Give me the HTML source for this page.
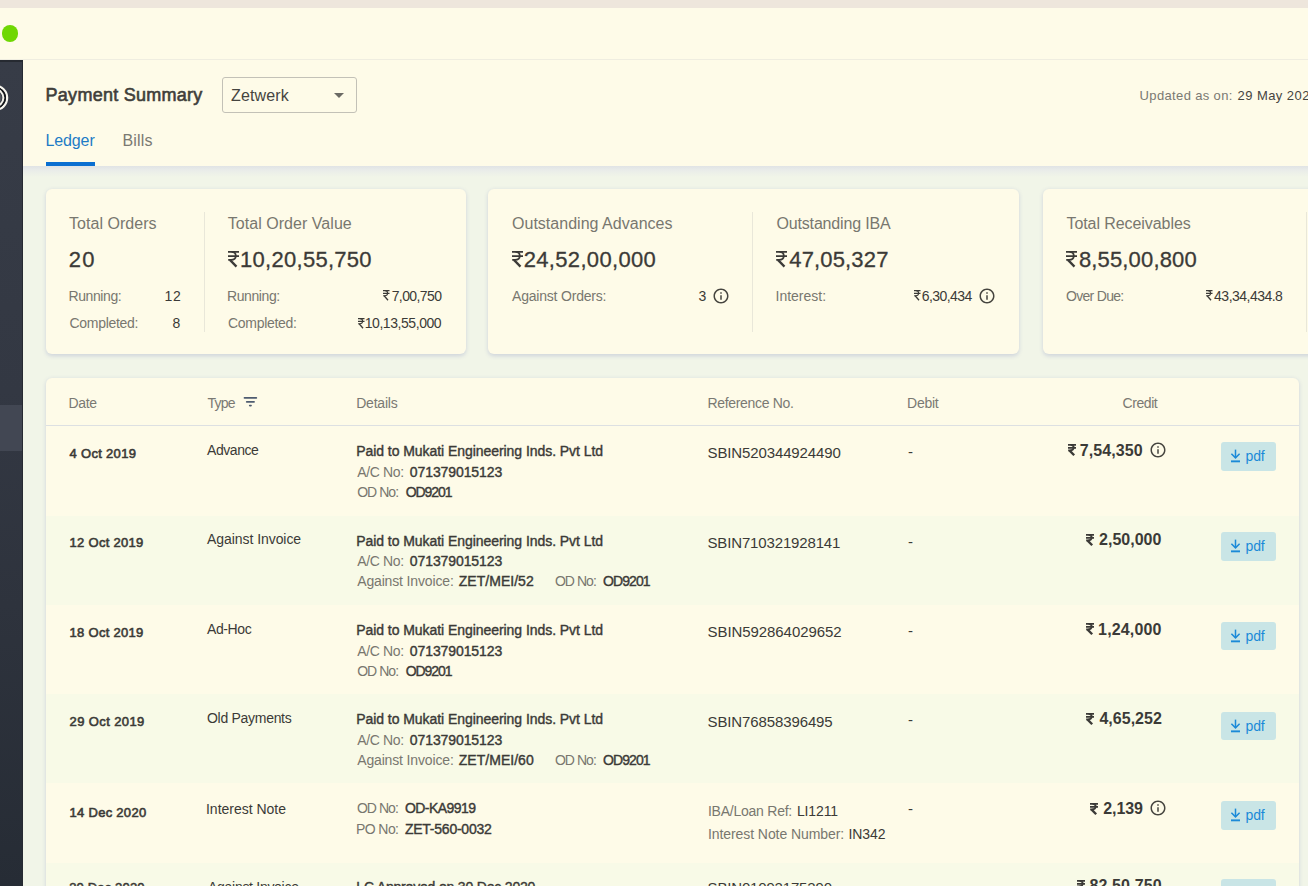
<!DOCTYPE html>
<html><head><meta charset="utf-8">
<style>
html,body{margin:0;padding:0}
body{width:1308px;height:886px;overflow:hidden;position:relative;background:#f1f5e8;font-family:"Liberation Sans",sans-serif}
.t{position:absolute;white-space:pre}
.rp{position:absolute;overflow:visible}
.ic{position:absolute}
.abs{position:absolute}
.topbar{left:0;top:0;width:1308px;height:8px;background:#eee6dc}
.appbar{left:0;top:8px;width:1308px;height:51px;background:#fefbe8;border-bottom:1px solid #efede0}
.dot{left:1.5px;top:25px;width:16.5px;height:16.5px;border-radius:50%;background:#6fd703}
.side{left:0;top:60px;width:23px;height:826px;background:linear-gradient(#373c47,#333843 40%,#2e333d 66%,#262c35)}
.sideedge{left:21.5px;top:60px;width:1.5px;height:826px;background:#262a32}
.hl{left:0;top:405px;width:21.5px;height:46px;background:#424753}
.ring{left:-19px;top:83.7px;width:21.5px;height:21.5px;border:3px solid #f4f2ea;border-radius:50%}
.ring2{left:-12px;top:91px;width:10px;height:10px;border:2.2px solid #f4f2ea;border-radius:50%}
.hdr{left:23px;top:60px;width:1285px;height:106px;background:#fefbe8;}
.dd{left:222px;top:77px;width:133px;height:34px;border:1px solid #c3c1b7;border-radius:3px;background:#fefbe8}
.tri{left:333.5px;top:92.5px;width:0;height:0;border-left:5.5px solid transparent;border-right:5.5px solid transparent;border-top:5.7px solid #6b6a64}
.tabline{left:46px;top:161.5px;width:49px;height:4.5px;background:#0a6fd1}
.card{top:189px;height:165px;background:#fefbe8;border-radius:6px;box-shadow:0 1.5px 4px rgba(70,80,170,.2)}
.div{top:212px;width:1px;height:120px;background:#e9e7d9}
.tbl{left:46px;top:377.5px;width:1253px;height:600px;background:#fefbe8;border-radius:6px;box-shadow:0 1.5px 4px rgba(70,80,170,.2);overflow:hidden}
.hline{left:46px;top:425px;width:1253px;height:1px;background:#dde0e2}
.row2{left:46px;width:1253px;background:#f8fae7}
.pb{position:absolute;left:1221px;width:55px;height:28.7px;border-radius:3px;background:#c9e5e6}
</style></head><body>
<div class="abs topbar"></div>
<div class="abs appbar"></div>
<div class="abs dot"></div>
<div class="abs side"></div>
<div class="abs hl"></div>
<div class="abs sideedge"></div>
<div class="abs" style="left:0;top:60px;width:23px;height:1.5px;background:#262a31"></div>
<svg class="abs" style="left:0;top:80px" width="16" height="36" viewBox="0 0 16 36"><circle cx="-5" cy="17.8" r="11.8" fill="none" stroke="#15181d" stroke-width="1.8"/><circle cx="-5" cy="17.8" r="12.1" fill="none" stroke="#f7f5ee" stroke-width="2.3"/><circle cx="-5" cy="17.8" r="10.2" fill="none" stroke="#14161a" stroke-width="1.6"/><circle cx="-5" cy="17.8" r="8.4" fill="none" stroke="#f4f2ea" stroke-width="2"/><circle cx="-5" cy="17.8" r="6.6" fill="#55585e"/></svg>
<div class="abs" style="left:23px;top:166px;width:1285px;height:11px;background:linear-gradient(#e0e3e5,#e9ece9 35%,rgba(241,245,232,0))"></div>
<div class="abs hdr"></div>
<div class="abs dd"></div>
<div class="abs tri"></div>
<div class="abs tabline"></div>
<div class="abs card" style="left:46px;width:420px"></div>
<div class="abs card" style="left:488px;width:531px"></div>
<div class="abs card" style="left:1043px;width:300px"></div>
<div class="abs div" style="left:204px"></div>
<div class="abs div" style="left:752px"></div>
<div class="abs div" style="left:1306px"></div>
<div class="abs tbl"></div>
<div class="abs hline"></div>
<div class="abs row2" style="top:515.5px;height:89.5px"></div>
<div class="abs row2" style="top:694.3px;height:89px"></div>
<div class="abs row2" style="top:863px;height:40px"></div>
<svg class="abs" style="left:243px;top:396px" width="15" height="11" viewBox="0 0 15 11"><g fill="#4f5c70"><rect x="0.6" y="1.1" width="13.6" height="1.7" rx="0.8"/><rect x="2.9" y="4.9" width="9" height="1.8" rx="0.8"/><rect x="5.9" y="8.8" width="3" height="1.6" rx="0.8"/></g></svg>
<div class="pb" style="top:442.20px"><svg style="position:absolute;left:9px;top:7px" width="11" height="14" viewBox="0 0 11 14"><g stroke="#1b8ad8" fill="none" stroke-width="1.5"><path d="M5.5 0.6V8.6"/><path d="M1.4 4.8L5.5 8.9L9.6 4.8"/></g><rect x="1" y="11.4" width="9" height="1.9" fill="#1b8ad8"/></svg><span style="position:absolute;left:24.5px;top:7px;font-size:14px;line-height:14px;letter-spacing:-0.1px;color:#1b8ad8">pdf</span></div>
<div class="pb" style="top:532.00px"><svg style="position:absolute;left:9px;top:7px" width="11" height="14" viewBox="0 0 11 14"><g stroke="#1b8ad8" fill="none" stroke-width="1.5"><path d="M5.5 0.6V8.6"/><path d="M1.4 4.8L5.5 8.9L9.6 4.8"/></g><rect x="1" y="11.4" width="9" height="1.9" fill="#1b8ad8"/></svg><span style="position:absolute;left:24.5px;top:7px;font-size:14px;line-height:14px;letter-spacing:-0.1px;color:#1b8ad8">pdf</span></div>
<div class="pb" style="top:621.60px"><svg style="position:absolute;left:9px;top:7px" width="11" height="14" viewBox="0 0 11 14"><g stroke="#1b8ad8" fill="none" stroke-width="1.5"><path d="M5.5 0.6V8.6"/><path d="M1.4 4.8L5.5 8.9L9.6 4.8"/></g><rect x="1" y="11.4" width="9" height="1.9" fill="#1b8ad8"/></svg><span style="position:absolute;left:24.5px;top:7px;font-size:14px;line-height:14px;letter-spacing:-0.1px;color:#1b8ad8">pdf</span></div>
<div class="pb" style="top:711.50px"><svg style="position:absolute;left:9px;top:7px" width="11" height="14" viewBox="0 0 11 14"><g stroke="#1b8ad8" fill="none" stroke-width="1.5"><path d="M5.5 0.6V8.6"/><path d="M1.4 4.8L5.5 8.9L9.6 4.8"/></g><rect x="1" y="11.4" width="9" height="1.9" fill="#1b8ad8"/></svg><span style="position:absolute;left:24.5px;top:7px;font-size:14px;line-height:14px;letter-spacing:-0.1px;color:#1b8ad8">pdf</span></div>
<div class="pb" style="top:801.20px"><svg style="position:absolute;left:9px;top:7px" width="11" height="14" viewBox="0 0 11 14"><g stroke="#1b8ad8" fill="none" stroke-width="1.5"><path d="M5.5 0.6V8.6"/><path d="M1.4 4.8L5.5 8.9L9.6 4.8"/></g><rect x="1" y="11.4" width="9" height="1.9" fill="#1b8ad8"/></svg><span style="position:absolute;left:24.5px;top:7px;font-size:14px;line-height:14px;letter-spacing:-0.1px;color:#1b8ad8">pdf</span></div>
<div class="pb" style="top:878.50px"><svg style="position:absolute;left:9px;top:7px" width="11" height="14" viewBox="0 0 11 14"><g stroke="#1b8ad8" fill="none" stroke-width="1.5"><path d="M5.5 0.6V8.6"/><path d="M1.4 4.8L5.5 8.9L9.6 4.8"/></g><rect x="1" y="11.4" width="9" height="1.9" fill="#1b8ad8"/></svg><span style="position:absolute;left:24.5px;top:7px;font-size:14px;line-height:14px;letter-spacing:-0.1px;color:#1b8ad8">pdf</span></div>
<svg class="ic" style="left:711.60px;top:287.00px" width="18" height="18" viewBox="0 0 24 24"><path fill="#46453f" d="M11 7h2v2h-2zm0 4h2v6h-2zm1-9C6.48 2 2 6.48 2 12s4.48 10 10 10 10-4.48 10-10S17.52 2 12 2zm0 18c-4.41 0-8-3.59-8-8s3.59-8 8-8 8 3.59 8 8-3.59 8-8 8z"/></svg>
<svg class="ic" style="left:978.30px;top:287.00px" width="18" height="18" viewBox="0 0 24 24"><path fill="#46453f" d="M11 7h2v2h-2zm0 4h2v6h-2zm1-9C6.48 2 2 6.48 2 12s4.48 10 10 10 10-4.48 10-10S17.52 2 12 2zm0 18c-4.41 0-8-3.59-8-8s3.59-8 8-8 8 3.59 8 8-3.59 8-8 8z"/></svg>
<svg class="ic" style="left:1148.50px;top:440.90px" width="18" height="18" viewBox="0 0 24 24"><path fill="#46453f" d="M11 7h2v2h-2zm0 4h2v6h-2zm1-9C6.48 2 2 6.48 2 12s4.48 10 10 10 10-4.48 10-10S17.52 2 12 2zm0 18c-4.41 0-8-3.59-8-8s3.59-8 8-8 8 3.59 8 8-3.59 8-8 8z"/></svg>
<svg class="ic" style="left:1148.60px;top:798.60px" width="18" height="18" viewBox="0 0 24 24"><path fill="#46453f" d="M11 7h2v2h-2zm0 4h2v6h-2zm1-9C6.48 2 2 6.48 2 12s4.48 10 10 10 10-4.48 10-10S17.52 2 12 2zm0 18c-4.41 0-8-3.59-8-8s3.59-8 8-8 8 3.59 8 8-3.59 8-8 8z"/></svg>
<svg class="rp" style="left:228.00px;top:250.90px;width:11px;height:16.2px" viewBox="0 0 11 16.2" preserveAspectRatio="none"><g fill="none" stroke="#3b3a37" stroke-width="1.75"><path d="M0 0.88H11M0 5.08H11"/><path d="M3.5 0.88C6.6 0.88 7.8 2.6 7.8 5C7.8 7.5 6 8.8 3 8.8H0.2"/><path d="M1.9 8.9L8.5 15.6" stroke-width="2.27"/></g></svg>
<svg class="rp" style="left:383.20px;top:290.40px;width:6.5px;height:10.6px" viewBox="0 0 11 16.2" preserveAspectRatio="none"><g fill="none" stroke="#3b3a37" stroke-width="1.75"><path d="M0 0.88H11M0 5.08H11"/><path d="M3.5 0.88C6.6 0.88 7.8 2.6 7.8 5C7.8 7.5 6 8.8 3 8.8H0.2"/><path d="M1.9 8.9L8.5 15.6" stroke-width="2.27"/></g></svg>
<svg class="rp" style="left:357.80px;top:317.60px;width:6.5px;height:10.6px" viewBox="0 0 11 16.2" preserveAspectRatio="none"><g fill="none" stroke="#3b3a37" stroke-width="1.75"><path d="M0 0.88H11M0 5.08H11"/><path d="M3.5 0.88C6.6 0.88 7.8 2.6 7.8 5C7.8 7.5 6 8.8 3 8.8H0.2"/><path d="M1.9 8.9L8.5 15.6" stroke-width="2.27"/></g></svg>
<svg class="rp" style="left:511.60px;top:250.70px;width:11px;height:16.2px" viewBox="0 0 11 16.2" preserveAspectRatio="none"><g fill="none" stroke="#3b3a37" stroke-width="1.75"><path d="M0 0.88H11M0 5.08H11"/><path d="M3.5 0.88C6.6 0.88 7.8 2.6 7.8 5C7.8 7.5 6 8.8 3 8.8H0.2"/><path d="M1.9 8.9L8.5 15.6" stroke-width="2.27"/></g></svg>
<svg class="rp" style="left:776.20px;top:250.70px;width:11px;height:16.2px" viewBox="0 0 11 16.2" preserveAspectRatio="none"><g fill="none" stroke="#3b3a37" stroke-width="1.75"><path d="M0 0.88H11M0 5.08H11"/><path d="M3.5 0.88C6.6 0.88 7.8 2.6 7.8 5C7.8 7.5 6 8.8 3 8.8H0.2"/><path d="M1.9 8.9L8.5 15.6" stroke-width="2.27"/></g></svg>
<svg class="rp" style="left:914.00px;top:290.40px;width:6.5px;height:10.6px" viewBox="0 0 11 16.2" preserveAspectRatio="none"><g fill="none" stroke="#3b3a37" stroke-width="1.75"><path d="M0 0.88H11M0 5.08H11"/><path d="M3.5 0.88C6.6 0.88 7.8 2.6 7.8 5C7.8 7.5 6 8.8 3 8.8H0.2"/><path d="M1.9 8.9L8.5 15.6" stroke-width="2.27"/></g></svg>
<svg class="rp" style="left:1065.80px;top:250.90px;width:11px;height:16.2px" viewBox="0 0 11 16.2" preserveAspectRatio="none"><g fill="none" stroke="#3b3a37" stroke-width="1.75"><path d="M0 0.88H11M0 5.08H11"/><path d="M3.5 0.88C6.6 0.88 7.8 2.6 7.8 5C7.8 7.5 6 8.8 3 8.8H0.2"/><path d="M1.9 8.9L8.5 15.6" stroke-width="2.27"/></g></svg>
<svg class="rp" style="left:1205.90px;top:290.40px;width:6.5px;height:10.6px" viewBox="0 0 11 16.2" preserveAspectRatio="none"><g fill="none" stroke="#3b3a37" stroke-width="1.75"><path d="M0 0.88H11M0 5.08H11"/><path d="M3.5 0.88C6.6 0.88 7.8 2.6 7.8 5C7.8 7.5 6 8.8 3 8.8H0.2"/><path d="M1.9 8.9L8.5 15.6" stroke-width="2.27"/></g></svg>
<svg class="rp" style="left:1067.80px;top:444.20px;width:8px;height:11.7px" viewBox="0 0 11 16.2" preserveAspectRatio="none"><g fill="none" stroke="#3b3a37" stroke-width="2.5"><path d="M0 1.25H11M0 5.45H11"/><path d="M3.5 1.25C6.6 1.25 7.8 2.6 7.8 5C7.8 7.5 6 8.8 3 8.8H0.2"/><path d="M1.9 8.9L8.5 15.6" stroke-width="3.25"/></g></svg>
<svg class="rp" style="left:1086.00px;top:533.70px;width:8px;height:11.7px" viewBox="0 0 11 16.2" preserveAspectRatio="none"><g fill="none" stroke="#3b3a37" stroke-width="2.5"><path d="M0 1.25H11M0 5.45H11"/><path d="M3.5 1.25C6.6 1.25 7.8 2.6 7.8 5C7.8 7.5 6 8.8 3 8.8H0.2"/><path d="M1.9 8.9L8.5 15.6" stroke-width="3.25"/></g></svg>
<svg class="rp" style="left:1086.00px;top:623.20px;width:8px;height:11.7px" viewBox="0 0 11 16.2" preserveAspectRatio="none"><g fill="none" stroke="#3b3a37" stroke-width="2.5"><path d="M0 1.25H11M0 5.45H11"/><path d="M3.5 1.25C6.6 1.25 7.8 2.6 7.8 5C7.8 7.5 6 8.8 3 8.8H0.2"/><path d="M1.9 8.9L8.5 15.6" stroke-width="3.25"/></g></svg>
<svg class="rp" style="left:1086.20px;top:712.50px;width:8px;height:11.7px" viewBox="0 0 11 16.2" preserveAspectRatio="none"><g fill="none" stroke="#3b3a37" stroke-width="2.5"><path d="M0 1.25H11M0 5.45H11"/><path d="M3.5 1.25C6.6 1.25 7.8 2.6 7.8 5C7.8 7.5 6 8.8 3 8.8H0.2"/><path d="M1.9 8.9L8.5 15.6" stroke-width="3.25"/></g></svg>
<svg class="rp" style="left:1090.40px;top:802.70px;width:8px;height:11.7px" viewBox="0 0 11 16.2" preserveAspectRatio="none"><g fill="none" stroke="#3b3a37" stroke-width="2.5"><path d="M0 1.25H11M0 5.45H11"/><path d="M3.5 1.25C6.6 1.25 7.8 2.6 7.8 5C7.8 7.5 6 8.8 3 8.8H0.2"/><path d="M1.9 8.9L8.5 15.6" stroke-width="3.25"/></g></svg>
<svg class="rp" style="left:1076.80px;top:879.50px;width:8px;height:11.7px" viewBox="0 0 11 16.2" preserveAspectRatio="none"><g fill="none" stroke="#3b3a37" stroke-width="2.5"><path d="M0 1.25H11M0 5.45H11"/><path d="M3.5 1.25C6.6 1.25 7.8 2.6 7.8 5C7.8 7.5 6 8.8 3 8.8H0.2"/><path d="M1.9 8.9L8.5 15.6" stroke-width="3.25"/></g></svg>
<span class="t" style="left:45.60px;top:86px;font-size:18px;line-height:18px;font-weight:400;-webkit-text-stroke:0.60px #403e3a;letter-spacing:0.257px;color:#403e3a">Payment Summary</span>
<span class="t" style="left:231.00px;top:88px;font-size:16px;line-height:16px;font-weight:400;letter-spacing:0.133px;color:#45443f">Zetwerk</span>
<span class="t" style="left:45.50px;top:133px;font-size:16px;line-height:16px;font-weight:400;letter-spacing:-0.120px;color:#1d7bc6">Ledger</span>
<span class="t" style="left:122.50px;top:133px;font-size:16px;line-height:16px;font-weight:400;letter-spacing:0.150px;color:#7a7972">Bills</span>
<span class="t" style="left:1139.60px;top:89px;font-size:13px;line-height:13px;font-weight:400;letter-spacing:0.354px;color:#7a7972">Updated as on:</span>
<span class="t" style="left:1237.50px;top:89px;font-size:13px;line-height:13px;font-weight:400;letter-spacing:0.444px;color:#45443f">29 May 202</span>
<span class="t" style="left:69.00px;top:216px;font-size:16px;line-height:16px;font-weight:400;letter-spacing:0.036px;color:#78776f">Total Orders</span>
<span class="t" style="left:68.70px;top:249px;font-size:22px;line-height:22px;font-weight:400;-webkit-text-stroke:0.30px #3b3a37;letter-spacing:1.400px;color:#3b3a37">20</span>
<span class="t" style="left:227.80px;top:216px;font-size:16px;line-height:16px;font-weight:400;letter-spacing:0.037px;color:#78776f">Total Order Value</span>
<span class="t" style="left:240.10px;top:249px;font-size:22px;line-height:22px;font-weight:400;-webkit-text-stroke:0.30px #3b3a37;letter-spacing:0.273px;color:#3b3a37">10,20,55,750</span>
<span class="t" style="left:68.50px;top:289px;font-size:14px;line-height:14px;font-weight:400;letter-spacing:-0.400px;color:#78776f">Running:</span>
<span class="t" style="left:164.50px;top:289px;font-size:14px;line-height:14px;font-weight:400;letter-spacing:0.600px;color:#3b3a37">12</span>
<span class="t" style="left:69.50px;top:316px;font-size:14px;line-height:14px;font-weight:400;letter-spacing:-0.289px;color:#78776f">Completed:</span>
<span class="t" style="left:172.50px;top:316px;font-size:14px;line-height:14px;font-weight:400;letter-spacing:0.000px;color:#3b3a37">8</span>
<span class="t" style="left:227.00px;top:289px;font-size:14px;line-height:14px;font-weight:400;letter-spacing:-0.400px;color:#78776f">Running:</span>
<span class="t" style="left:391.70px;top:289px;font-size:14px;line-height:14px;font-weight:400;letter-spacing:-0.600px;color:#3b3a37">7,00,750</span>
<span class="t" style="left:228.00px;top:316px;font-size:14px;line-height:14px;font-weight:400;letter-spacing:-0.289px;color:#78776f">Completed:</span>
<span class="t" style="left:364.70px;top:316px;font-size:14px;line-height:14px;font-weight:400;letter-spacing:-0.436px;color:#3b3a37">10,13,55,000</span>
<span class="t" style="left:512.00px;top:216px;font-size:16px;line-height:16px;font-weight:400;letter-spacing:0.021px;color:#78776f">Outstanding Advances</span>
<span class="t" style="left:523.70px;top:249px;font-size:22px;line-height:22px;font-weight:400;-webkit-text-stroke:0.30px #3b3a37;letter-spacing:0.327px;color:#3b3a37">24,52,00,000</span>
<span class="t" style="left:512.00px;top:289px;font-size:14px;line-height:14px;font-weight:400;letter-spacing:-0.200px;color:#78776f">Against Orders:</span>
<span class="t" style="left:698.40px;top:289px;font-size:14px;line-height:14px;font-weight:400;letter-spacing:0.000px;color:#3b3a37">3</span>
<span class="t" style="left:776.50px;top:216px;font-size:16px;line-height:16px;font-weight:400;letter-spacing:-0.171px;color:#78776f">Outstanding IBA</span>
<span class="t" style="left:789.30px;top:249px;font-size:22px;line-height:22px;font-weight:400;-webkit-text-stroke:0.30px #3b3a37;letter-spacing:0.150px;color:#3b3a37">47,05,327</span>
<span class="t" style="left:775.50px;top:289px;font-size:14px;line-height:14px;font-weight:400;letter-spacing:0.000px;color:#78776f">Interest:</span>
<span class="t" style="left:921.80px;top:289px;font-size:14px;line-height:14px;font-weight:400;letter-spacing:-0.571px;color:#3b3a37">6,30,434</span>
<span class="t" style="left:1066.50px;top:216px;font-size:16px;line-height:16px;font-weight:400;letter-spacing:-0.075px;color:#78776f">Total Receivables</span>
<span class="t" style="left:1078.90px;top:249px;font-size:22px;line-height:22px;font-weight:400;-webkit-text-stroke:0.30px #3b3a37;letter-spacing:0.160px;color:#3b3a37">8,55,00,800</span>
<span class="t" style="left:1066.00px;top:289px;font-size:14px;line-height:14px;font-weight:400;letter-spacing:-0.700px;color:#78776f">Over Due:</span>
<span class="t" style="left:1214.10px;top:289px;font-size:14px;line-height:14px;font-weight:400;letter-spacing:-0.520px;color:#3b3a37">43,34,434.8</span>
<span class="t" style="left:68.50px;top:396px;font-size:14px;line-height:14px;font-weight:400;letter-spacing:-0.333px;color:#7a7973">Date</span>
<span class="t" style="left:207.50px;top:396px;font-size:14px;line-height:14px;font-weight:400;letter-spacing:-0.733px;color:#7a7973">Type</span>
<span class="t" style="left:356.20px;top:396px;font-size:14px;line-height:14px;font-weight:400;letter-spacing:-0.200px;color:#7a7973">Details</span>
<span class="t" style="left:707.50px;top:396px;font-size:14px;line-height:14px;font-weight:400;letter-spacing:-0.333px;color:#7a7973">Reference No.</span>
<span class="t" style="left:907.10px;top:396px;font-size:14px;line-height:14px;font-weight:400;letter-spacing:-0.300px;color:#7a7973">Debit</span>
<span class="t" style="left:1122.60px;top:396px;font-size:14px;line-height:14px;font-weight:400;letter-spacing:-0.440px;color:#7a7973">Credit</span>
<span class="t" style="left:69.50px;top:447px;font-size:13px;line-height:13px;font-weight:400;-webkit-text-stroke:0.60px #3b3a37;letter-spacing:0.311px;color:#3b3a37">4 Oct 2019</span>
<span class="t" style="left:207.00px;top:443px;font-size:14px;line-height:14px;font-weight:400;letter-spacing:-0.433px;color:#3b3a37">Advance</span>
<span class="t" style="left:356.20px;top:444px;font-size:14px;line-height:14px;font-weight:400;-webkit-text-stroke:0.40px #3b3a37;letter-spacing:-0.056px;color:#3b3a37">Paid to Mukati Engineering Inds. Pvt Ltd</span>
<span class="t" style="left:357.20px;top:465px;font-size:14px;line-height:14px;font-weight:400;letter-spacing:-0.333px;color:#78776f">A/C No:</span>
<span class="t" style="left:409.80px;top:465px;font-size:14px;line-height:14px;font-weight:400;-webkit-text-stroke:0.40px #3b3a37;letter-spacing:-0.091px;color:#3b3a37">071379015123</span>
<span class="t" style="left:357.20px;top:485px;font-size:14px;line-height:14px;font-weight:400;letter-spacing:-0.960px;color:#78776f">OD No:</span>
<span class="t" style="left:405.70px;top:485px;font-size:14px;line-height:14px;font-weight:400;-webkit-text-stroke:0.40px #3b3a37;letter-spacing:-1.040px;color:#3b3a37">OD9201</span>
<span class="t" style="left:707.50px;top:445px;font-size:15px;line-height:15px;font-weight:400;letter-spacing:-0.120px;color:#3b3a37">SBIN520344924490</span>
<span class="t" style="left:908.10px;top:444px;font-size:15px;line-height:15px;font-weight:400;letter-spacing:0.000px;color:#3b3a37">-</span>
<span class="t" style="left:1079.70px;top:443px;font-size:16px;line-height:16px;font-weight:700;letter-spacing:0.086px;color:#3b3a37">7,54,350</span>
<span class="t" style="left:69.50px;top:536px;font-size:13px;line-height:13px;font-weight:400;-webkit-text-stroke:0.60px #3b3a37;letter-spacing:0.300px;color:#3b3a37">12 Oct 2019</span>
<span class="t" style="left:207.00px;top:532px;font-size:14px;line-height:14px;font-weight:400;letter-spacing:-0.057px;color:#3b3a37">Against Invoice</span>
<span class="t" style="left:356.20px;top:534px;font-size:14px;line-height:14px;font-weight:400;-webkit-text-stroke:0.40px #3b3a37;letter-spacing:-0.056px;color:#3b3a37">Paid to Mukati Engineering Inds. Pvt Ltd</span>
<span class="t" style="left:357.20px;top:554px;font-size:14px;line-height:14px;font-weight:400;letter-spacing:-0.333px;color:#78776f">A/C No:</span>
<span class="t" style="left:409.80px;top:554px;font-size:14px;line-height:14px;font-weight:400;-webkit-text-stroke:0.40px #3b3a37;letter-spacing:-0.091px;color:#3b3a37">071379015123</span>
<span class="t" style="left:357.20px;top:574px;font-size:14px;line-height:14px;font-weight:400;letter-spacing:-0.147px;color:#78776f">Against Invoice:</span>
<span class="t" style="left:458.80px;top:574px;font-size:14px;line-height:14px;font-weight:400;-webkit-text-stroke:0.40px #3b3a37;letter-spacing:0.022px;color:#3b3a37">ZET/MEI/52</span>
<span class="t" style="left:554.90px;top:574px;font-size:14px;line-height:14px;font-weight:400;letter-spacing:-0.960px;color:#78776f">OD No:</span>
<span class="t" style="left:603.10px;top:574px;font-size:14px;line-height:14px;font-weight:400;-webkit-text-stroke:0.40px #3b3a37;letter-spacing:-0.920px;color:#3b3a37">OD9201</span>
<span class="t" style="left:707.50px;top:535px;font-size:15px;line-height:15px;font-weight:400;letter-spacing:-0.147px;color:#3b3a37">SBIN710321928141</span>
<span class="t" style="left:908.10px;top:534px;font-size:15px;line-height:15px;font-weight:400;letter-spacing:0.000px;color:#3b3a37">-</span>
<span class="t" style="left:1099.10px;top:532px;font-size:16px;line-height:16px;font-weight:700;letter-spacing:0.000px;color:#3b3a37">2,50,000</span>
<span class="t" style="left:69.50px;top:626px;font-size:13px;line-height:13px;font-weight:400;-webkit-text-stroke:0.60px #3b3a37;letter-spacing:0.300px;color:#3b3a37">18 Oct 2019</span>
<span class="t" style="left:207.00px;top:622px;font-size:14px;line-height:14px;font-weight:400;letter-spacing:-0.400px;color:#3b3a37">Ad-Hoc</span>
<span class="t" style="left:356.20px;top:623px;font-size:14px;line-height:14px;font-weight:400;-webkit-text-stroke:0.40px #3b3a37;letter-spacing:-0.056px;color:#3b3a37">Paid to Mukati Engineering Inds. Pvt Ltd</span>
<span class="t" style="left:357.20px;top:644px;font-size:14px;line-height:14px;font-weight:400;letter-spacing:-0.333px;color:#78776f">A/C No:</span>
<span class="t" style="left:409.80px;top:644px;font-size:14px;line-height:14px;font-weight:400;-webkit-text-stroke:0.40px #3b3a37;letter-spacing:-0.091px;color:#3b3a37">071379015123</span>
<span class="t" style="left:357.20px;top:664px;font-size:14px;line-height:14px;font-weight:400;letter-spacing:-0.960px;color:#78776f">OD No:</span>
<span class="t" style="left:405.70px;top:664px;font-size:14px;line-height:14px;font-weight:400;-webkit-text-stroke:0.40px #3b3a37;letter-spacing:-1.040px;color:#3b3a37">OD9201</span>
<span class="t" style="left:707.50px;top:624px;font-size:15px;line-height:15px;font-weight:400;letter-spacing:-0.067px;color:#3b3a37">SBIN592864029652</span>
<span class="t" style="left:908.10px;top:623px;font-size:15px;line-height:15px;font-weight:400;letter-spacing:0.000px;color:#3b3a37">-</span>
<span class="t" style="left:1098.10px;top:622px;font-size:16px;line-height:16px;font-weight:700;letter-spacing:0.143px;color:#3b3a37">1,24,000</span>
<span class="t" style="left:69.50px;top:715px;font-size:13px;line-height:13px;font-weight:400;-webkit-text-stroke:0.60px #3b3a37;letter-spacing:0.400px;color:#3b3a37">29 Oct 2019</span>
<span class="t" style="left:207.00px;top:711px;font-size:14px;line-height:14px;font-weight:400;letter-spacing:-0.291px;color:#3b3a37">Old Payments</span>
<span class="t" style="left:356.20px;top:712px;font-size:14px;line-height:14px;font-weight:400;-webkit-text-stroke:0.40px #3b3a37;letter-spacing:-0.056px;color:#3b3a37">Paid to Mukati Engineering Inds. Pvt Ltd</span>
<span class="t" style="left:357.20px;top:733px;font-size:14px;line-height:14px;font-weight:400;letter-spacing:-0.333px;color:#78776f">A/C No:</span>
<span class="t" style="left:409.80px;top:733px;font-size:14px;line-height:14px;font-weight:400;-webkit-text-stroke:0.40px #3b3a37;letter-spacing:-0.091px;color:#3b3a37">071379015123</span>
<span class="t" style="left:357.20px;top:753px;font-size:14px;line-height:14px;font-weight:400;letter-spacing:-0.147px;color:#78776f">Against Invoice:</span>
<span class="t" style="left:458.80px;top:753px;font-size:14px;line-height:14px;font-weight:400;-webkit-text-stroke:0.40px #3b3a37;letter-spacing:0.022px;color:#3b3a37">ZET/MEI/60</span>
<span class="t" style="left:554.90px;top:753px;font-size:14px;line-height:14px;font-weight:400;letter-spacing:-0.960px;color:#78776f">OD No:</span>
<span class="t" style="left:603.10px;top:753px;font-size:14px;line-height:14px;font-weight:400;-webkit-text-stroke:0.40px #3b3a37;letter-spacing:-0.920px;color:#3b3a37">OD9201</span>
<span class="t" style="left:707.50px;top:714px;font-size:15px;line-height:15px;font-weight:400;letter-spacing:-0.114px;color:#3b3a37">SBIN76858396495</span>
<span class="t" style="left:908.10px;top:712px;font-size:15px;line-height:15px;font-weight:400;letter-spacing:0.000px;color:#3b3a37">-</span>
<span class="t" style="left:1099.40px;top:711px;font-size:16px;line-height:16px;font-weight:700;letter-spacing:0.029px;color:#3b3a37">4,65,252</span>
<span class="t" style="left:69.60px;top:806px;font-size:13px;line-height:13px;font-weight:400;-webkit-text-stroke:0.60px #3b3a37;letter-spacing:0.280px;color:#3b3a37">14 Dec 2020</span>
<span class="t" style="left:206.00px;top:802px;font-size:14px;line-height:14px;font-weight:400;letter-spacing:-0.017px;color:#3b3a37">Interest Note</span>
<span class="t" style="left:356.90px;top:801px;font-size:14px;line-height:14px;font-weight:400;letter-spacing:-0.960px;color:#78776f">OD No:</span>
<span class="t" style="left:404.90px;top:801px;font-size:14px;line-height:14px;font-weight:400;-webkit-text-stroke:0.40px #3b3a37;letter-spacing:-0.550px;color:#3b3a37">OD-KA9919</span>
<span class="t" style="left:355.90px;top:822px;font-size:14px;line-height:14px;font-weight:400;letter-spacing:-0.560px;color:#78776f">PO No:</span>
<span class="t" style="left:404.90px;top:822px;font-size:14px;line-height:14px;font-weight:400;-webkit-text-stroke:0.40px #3b3a37;letter-spacing:-0.236px;color:#3b3a37">ZET-560-0032</span>
<span class="t" style="left:707.90px;top:804px;font-size:14px;line-height:14px;font-weight:400;letter-spacing:-0.233px;color:#78776f">IBA/Loan Ref:</span>
<span class="t" style="left:796.90px;top:804px;font-size:14px;line-height:14px;font-weight:400;letter-spacing:-0.120px;color:#3b3a37">LI1211</span>
<span class="t" style="left:707.90px;top:827px;font-size:14px;line-height:14px;font-weight:400;letter-spacing:-0.070px;color:#78776f">Interest Note Number:</span>
<span class="t" style="left:848.50px;top:827px;font-size:14px;line-height:14px;font-weight:400;letter-spacing:-0.100px;color:#3b3a37">IN342</span>
<span class="t" style="left:908.10px;top:801px;font-size:15px;line-height:15px;font-weight:400;letter-spacing:0.000px;color:#3b3a37">-</span>
<span class="t" style="left:1103.30px;top:801px;font-size:16px;line-height:16px;font-weight:700;letter-spacing:-0.100px;color:#3b3a37">2,139</span>
<span class="t" style="left:69.20px;top:881px;font-size:13px;line-height:13px;font-weight:400;-webkit-text-stroke:0.60px #3b3a37;letter-spacing:0.160px;color:#3b3a37">30 Dec 2020</span>
<span class="t" style="left:208.00px;top:880px;font-size:14px;line-height:14px;font-weight:400;letter-spacing:-0.286px;color:#3b3a37">Against Invoice</span>
<span class="t" style="left:356.30px;top:880px;font-size:14px;line-height:14px;font-weight:400;-webkit-text-stroke:0.40px #3b3a37;letter-spacing:-0.184px;color:#3b3a37">LC Approved on 30 Dec 2020</span>
<span class="t" style="left:707.60px;top:880px;font-size:15px;line-height:15px;font-weight:400;letter-spacing:-0.171px;color:#3b3a37">SBIN01092175290</span>
<span class="t" style="left:908.10px;top:878px;font-size:15px;line-height:15px;font-weight:400;letter-spacing:0.000px;color:#3b3a37">-</span>
<span class="t" style="left:1089.40px;top:878px;font-size:16px;line-height:16px;font-weight:700;letter-spacing:0.125px;color:#3b3a37">82,50,750</span>
</body></html>
